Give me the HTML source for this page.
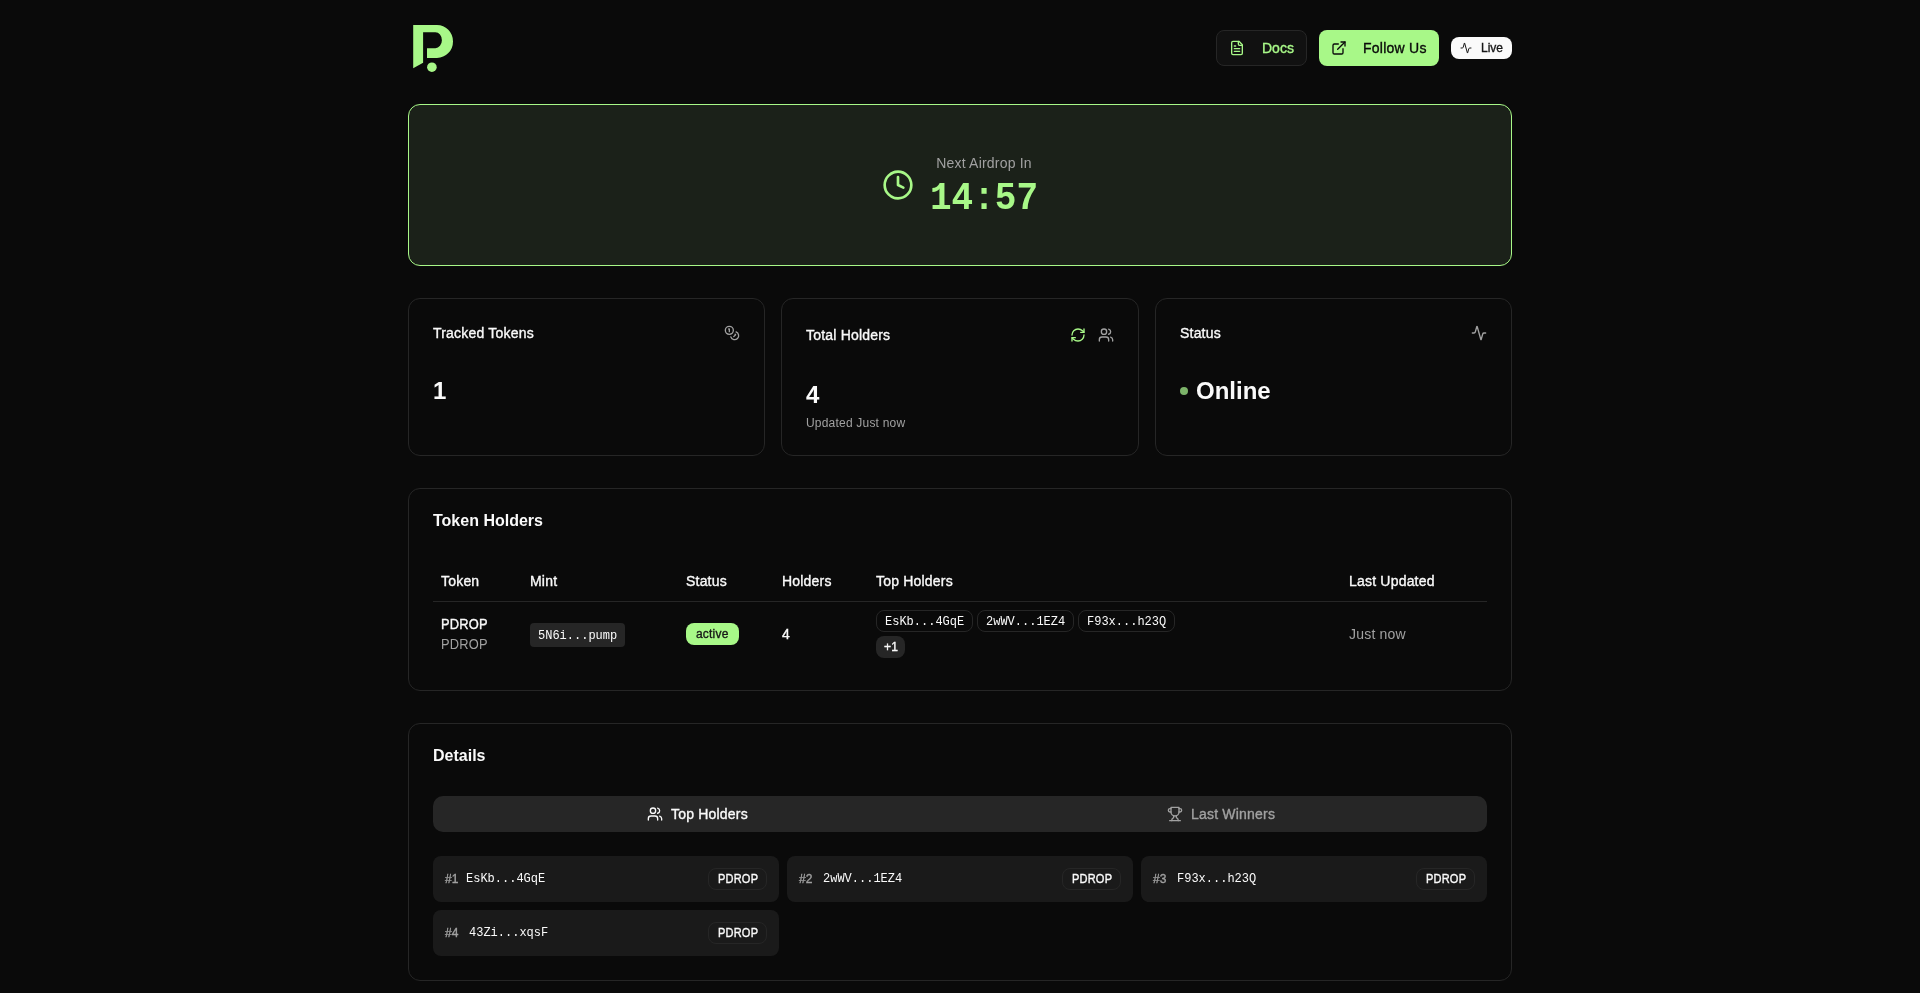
<!DOCTYPE html>
<html><head><meta charset="utf-8">
<style>
*{box-sizing:border-box;margin:0;padding:0}
html,body{width:1920px;height:993px;overflow:hidden;background:#0a0a0a;color:#fafafa;font-family:"Liberation Sans",sans-serif;}
.abs{position:absolute}
.mono{font-family:"Liberation Mono",monospace}
svg.i{fill:none;stroke:currentColor;stroke-width:2;stroke-linecap:round;stroke-linejoin:round;display:block}
.card{position:absolute;border:1px solid #262626;border-radius:12px;background:#0a0a0a}
.btn{position:absolute;border-radius:8px;font-size:14px;line-height:20px}
.t14{font-size:14px;line-height:20px;letter-spacing:0.2px}
.t12{font-size:12px;line-height:16px;letter-spacing:0.2px}
.mono{letter-spacing:0 !important}
.muted{color:#a1a1a1}
.med{-webkit-text-stroke:0.35px currentColor}
</style></head><body><div id="w" style="position:absolute;left:0;top:0;width:1920px;height:993px;will-change:transform">

<!-- logo -->
<svg class="abs" style="left:405px;top:18px" width="60" height="60" viewBox="0 0 60 60">
  <path fill="#a8f888" d="M8.2 6.9 H32 A16 16.5 0 0 1 32 39.9 H22 V30.2 H30.4 A6.5 8 0 0 0 30.4 14.2 H18.1 V44.7 L8.2 50.2 Z"/>
  <circle cx="26.9" cy="49.2" r="4.8" fill="#a8f888"/>
</svg>

<!-- header buttons -->
<div class="btn" style="left:1216px;top:30px;width:91px;height:36px;border:1px solid #262626;background:#111111;color:#a8f888">
  <svg class="i abs" style="left:12px;top:9px" width="16" height="16" viewBox="0 0 24 24"><path d="M15 2H6a2 2 0 0 0-2 2v16a2 2 0 0 0 2 2h12a2 2 0 0 0 2-2V7Z"/><path d="M14 2v4a2 2 0 0 0 2 2h4"/><path d="M10 9H8"/><path d="M16 13H8"/><path d="M16 17H8"/></svg>
  <span class="abs med" style="left:45px;top:7px">Docs</span>
</div>
<div class="btn" style="left:1319px;top:30px;width:120px;height:36px;background:#a8f888;color:#0a0a0a">
  <svg class="i abs" style="left:12px;top:10px" width="16" height="16" viewBox="0 0 24 24"><path d="M15 3h6v6"/><path d="M10 14 21 3"/><path d="M18 13v6a2 2 0 0 1-2 2H5a2 2 0 0 1-2-2V8a2 2 0 0 1 2-2h6"/></svg>
  <span class="abs med" style="left:44px;top:8px;letter-spacing:0.25px">Follow Us</span>
</div>
<div class="btn" style="left:1451px;top:37px;width:61px;height:22px;background:#fafafa;color:#171717;font-size:12px;line-height:16px">
  <svg class="i abs" style="left:9px;top:5px" width="12" height="12" viewBox="0 0 24 24"><path d="M22 12h-2.48a2 2 0 0 0-1.93 1.46l-2.35 8.36a.25.25 0 0 1-.48 0L9.24 2.18a.25.25 0 0 0-.48 0l-2.35 8.36A2 2 0 0 1 4.49 12H2"/></svg>
  <span class="abs med" style="left:30px;top:3px">Live</span>
</div>

<!-- banner -->
<div class="abs" style="left:408px;top:104px;width:1104px;height:162px;border:1px solid #a8f888;border-radius:12px;background:#1b2119"></div>
<svg class="i abs" style="left:882px;top:169px;color:#a8f888" width="32" height="32" viewBox="0 0 24 24"><circle cx="12" cy="12" r="10"/><polyline points="12 6 12 12 16 14"/></svg>
<div class="abs t14 muted" style="left:930px;top:153px;width:108px;text-align:center">Next Airdrop In</div>
<div class="abs mono" style="left:930px;top:179px;width:108px;text-align:center;font-size:36px;line-height:40px;font-weight:bold;color:#a8f888;transform:scaleY(1.08)">14:57</div>

<!-- stat cards -->
<div class="card" style="left:408px;top:298px;width:357px;height:158px"></div>
<div class="card" style="left:781px;top:298px;width:358px;height:158px"></div>
<div class="card" style="left:1155px;top:298px;width:357px;height:158px"></div>

<div class="abs t14 med" style="left:433px;top:323px">Tracked Tokens</div>
<svg class="i abs muted" style="left:724px;top:325px" width="16" height="16" viewBox="0 0 24 24"><circle cx="8" cy="8" r="6"/><path d="M18.09 10.37A6 6 0 1 1 10.34 18"/><path d="M7 6h1v4"/><path d="m16.71 13.88.7.71-2.82 2.82"/></svg>
<div class="abs" style="left:433px;top:375px;font-size:24px;line-height:32px;font-weight:bold">1</div>

<div class="abs t14 med" style="left:806px;top:325px">Total Holders</div>
<svg class="i abs" style="left:1070px;top:327px;color:#a8f888" width="16" height="16" viewBox="0 0 24 24"><path d="M3 12a9 9 0 0 1 9-9 9.75 9.75 0 0 1 6.74 2.74L21 8"/><path d="M21 3v5h-5"/><path d="M21 12a9 9 0 0 1-9 9 9.75 9.75 0 0 1-6.74-2.74L3 16"/><path d="M8 16H3v5"/></svg>
<svg class="i abs muted" style="left:1098px;top:327px" width="16" height="16" viewBox="0 0 24 24"><path d="M16 21v-2a4 4 0 0 0-4-4H6a4 4 0 0 0-4 4v2"/><circle cx="9" cy="7" r="4"/><path d="M22 21v-2a4 4 0 0 0-3-3.87"/><path d="M16 3.13a4 4 0 0 1 0 7.75"/></svg>
<div class="abs" style="left:806px;top:379px;font-size:24px;line-height:32px;font-weight:bold">4</div>
<div class="abs t12 muted" style="left:806px;top:415px">Updated Just now</div>

<div class="abs t14 med" style="left:1180px;top:323px">Status</div>
<svg class="i abs muted" style="left:1471px;top:325px" width="16" height="16" viewBox="0 0 24 24"><path d="M22 12h-2.48a2 2 0 0 0-1.93 1.46l-2.35 8.36a.25.25 0 0 1-.48 0L9.24 2.18a.25.25 0 0 0-.48 0l-2.35 8.36A2 2 0 0 1 4.49 12H2"/></svg>
<div class="abs" style="left:1180px;top:387px;width:8px;height:8px;border-radius:50%;background:#7db46a"></div>
<div class="abs" style="left:1196px;top:375px;font-size:24px;line-height:32px;font-weight:bold">Online</div>

<!-- token holders card -->
<div class="card" style="left:408px;top:488px;width:1104px;height:203px"></div>
<div class="abs" style="left:433px;top:513px;font-size:16px;line-height:16px;font-weight:bold">Token Holders</div>
<div class="abs t14 med" style="left:441px;top:571px">Token</div>
<div class="abs t14 med" style="left:530px;top:571px">Mint</div>
<div class="abs t14 med" style="left:686px;top:571px">Status</div>
<div class="abs t14 med" style="left:782px;top:571px">Holders</div>
<div class="abs t14 med" style="left:876px;top:571px">Top Holders</div>
<div class="abs t14 med" style="left:1349px;top:571px">Last Updated</div>
<div class="abs" style="left:433px;top:601px;width:1054px;height:1px;background:#262626"></div>

<div class="abs t14 med" style="left:441px;top:614px;transform:scaleX(0.92);transform-origin:0 0">PDROP</div>
<div class="abs t14 muted" style="left:441px;top:634px;transform:scaleX(0.92);transform-origin:0 0">PDROP</div>
<div class="abs mono t12" style="left:530px;top:623px;width:95px;height:24px;padding:5px 8px 3px;border-radius:4px;background:#262626">5N6i...pump</div>
<div class="abs t12 med" style="left:686px;top:623px;width:53px;height:22px;padding:3px 10px;border-radius:8px;background:#a8f888;color:#171717">active</div>
<div class="abs t14 med" style="left:782px;top:624px">4</div>
<div class="abs mono t12" style="left:876px;top:610px;height:22px;padding:3px 8px 1px;border:1px solid #262626;border-radius:8px">EsKb...4GqE</div>
<div class="abs mono t12" style="left:977px;top:610px;height:22px;padding:3px 8px 1px;border:1px solid #262626;border-radius:8px">2wWV...1EZ4</div>
<div class="abs mono t12" style="left:1078px;top:610px;height:22px;padding:3px 8px 1px;border:1px solid #262626;border-radius:8px">F93x...h23Q</div>
<div class="abs t12 med" style="left:876px;top:636px;width:29px;height:22px;padding:3px 8px;border-radius:8px;background:#262626">+1</div>
<div class="abs t14 muted" style="left:1349px;top:624px">Just now</div>

<!-- details card -->
<div class="card" style="left:408px;top:723px;width:1104px;height:258px"></div>
<div class="abs" style="left:433px;top:748px;font-size:16px;line-height:16px;font-weight:bold">Details</div>
<div class="abs" style="left:433px;top:796px;width:1054px;height:36px;border-radius:10px;background:#262626"></div>
<svg class="i abs" style="left:647px;top:806px" width="16" height="16" viewBox="0 0 24 24"><path d="M16 21v-2a4 4 0 0 0-4-4H6a4 4 0 0 0-4 4v2"/><circle cx="9" cy="7" r="4"/><path d="M22 21v-2a4 4 0 0 0-3-3.87"/><path d="M16 3.13a4 4 0 0 1 0 7.75"/></svg>
<div class="abs t14 med" style="left:671px;top:804px">Top Holders</div>
<svg class="i abs muted" style="left:1167px;top:806px" width="16" height="16" viewBox="0 0 24 24"><path d="M6 9H4.5a2.5 2.5 0 0 1 0-5H6"/><path d="M18 9h1.5a2.5 2.5 0 0 0 0-5H18"/><path d="M4 22h16"/><path d="M10 14.66V17c0 .55-.47.98-.97 1.21C7.85 18.75 7 20.24 7 22"/><path d="M14 14.66V17c0 .55.47.98.97 1.21C16.15 18.75 17 20.24 17 22"/><path d="M18 2H6v7a6 6 0 0 0 12 0V2Z"/></svg>
<div class="abs t14 muted med" style="left:1191px;top:804px">Last Winners</div>

<div class="abs" style="left:433px;top:856px;width:346px;height:46px;border-radius:8px;background:#1a1a1a"></div>
<div class="abs" style="left:787px;top:856px;width:346px;height:46px;border-radius:8px;background:#1a1a1a"></div>
<div class="abs" style="left:1141px;top:856px;width:346px;height:46px;border-radius:8px;background:#1a1a1a"></div>
<div class="abs" style="left:433px;top:910px;width:346px;height:46px;border-radius:8px;background:#1a1a1a"></div>

<div class="abs t12 muted med" style="left:445px;top:871px">#1</div>
<div class="abs mono t12" style="left:466px;top:871px">EsKb...4GqE</div>
<div class="abs t12 med" style="left:708px;top:868px;width:59px;height:22px;padding:2px 9px;border:1px solid #262626;border-radius:8px"><span style="display:inline-block;transform:scaleX(0.92);transform-origin:0 0">PDROP</span></div>
<div class="abs t12 muted med" style="left:799px;top:871px">#2</div>
<div class="abs mono t12" style="left:823px;top:871px">2wWV...1EZ4</div>
<div class="abs t12 med" style="left:1062px;top:868px;width:59px;height:22px;padding:2px 9px;border:1px solid #262626;border-radius:8px"><span style="display:inline-block;transform:scaleX(0.92);transform-origin:0 0">PDROP</span></div>
<div class="abs t12 muted med" style="left:1153px;top:871px">#3</div>
<div class="abs mono t12" style="left:1177px;top:871px">F93x...h23Q</div>
<div class="abs t12 med" style="left:1416px;top:868px;width:59px;height:22px;padding:2px 9px;border:1px solid #262626;border-radius:8px"><span style="display:inline-block;transform:scaleX(0.92);transform-origin:0 0">PDROP</span></div>
<div class="abs t12 muted med" style="left:445px;top:925px">#4</div>
<div class="abs mono t12" style="left:469px;top:925px">43Zi...xqsF</div>
<div class="abs t12 med" style="left:708px;top:922px;width:59px;height:22px;padding:2px 9px;border:1px solid #262626;border-radius:8px"><span style="display:inline-block;transform:scaleX(0.92);transform-origin:0 0">PDROP</span></div>

</div></body></html>
